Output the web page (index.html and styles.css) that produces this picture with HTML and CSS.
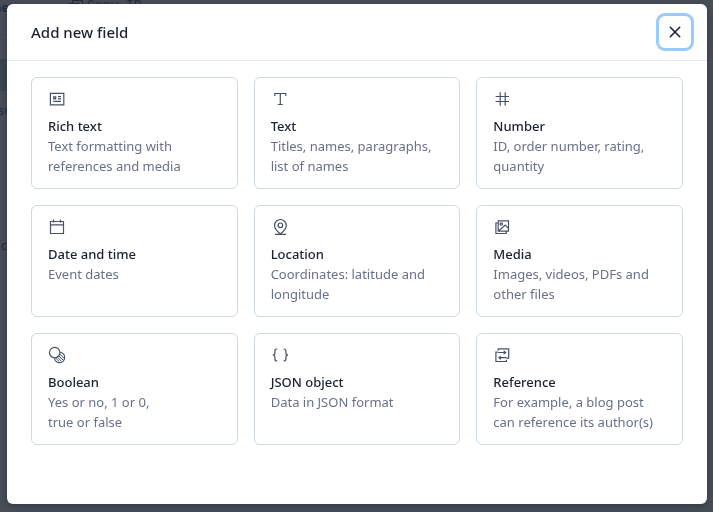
FILE: index.html
```html
<!DOCTYPE html>
<html lang="en">
<head>
<meta charset="utf-8">
<title>Add new field</title>
<link rel="stylesheet" href="styles.css">
</head>
<body>

<div class="page" aria-hidden="true">
  <div class="page-side">
    <div class="side-title">ne</div>
    <div class="side-active"></div>
    <div class="side-item">so</div>
    <div class="side-item last">c</div>
  </div>
  <div class="page-top">
    <svg width="14" height="14" viewBox="0 0 14 14"><path d="M3.5 3.5v-3h10v10h-3M.5 3.5h10v10H.5z"/></svg>
    <span>Copy ID</span>
  </div>
</div>

<div class="overlay">
  <div class="dialog" role="dialog" aria-labelledby="dialogTitle">
    <div class="dialog-header">
      <h2 id="dialogTitle">Add new field</h2>
      <button class="close" aria-label="Close">
        <svg width="12" height="12" viewBox="0 0 12 12"><path d="M1.3 1.3l9.4 9.4M10.7 1.3l-9.4 9.4"/></svg>
      </button>
    </div>

    <div class="fields">
      <button class="field">
        <svg class="icon" viewBox="0 0 18 18"><path d="M2.4 3.3h13.4v11.6H2.4z"/><path d="M5.7 6.8h2v2h-2zM10 6.6h3M10 8.8h3M5.2 11.4H13"/></svg>
        <span class="name">Rich text</span>
        <span class="info">Text formatting with references and media</span>
      </button>
      <button class="field">
        <svg class="icon" viewBox="0 0 18 18"><path d="M3.8 6V3.5h11V6M9.3 3.5v11M6.8 14.5h5"/></svg>
        <span class="name">Text</span>
        <span class="info">Titles, names, paragraphs, list of names</span>
      </button>
      <button class="field">
        <svg class="icon" viewBox="0 0 18 18"><path d="M7.2 2.3v13.4M12.2 2.3v13.4M2.6 6.5h13.4M2.6 11.5h13.4"/></svg>
        <span class="name">Number</span>
        <span class="info">ID, order number, rating, quantity</span>
      </button>
      <button class="field">
        <svg class="icon" viewBox="0 0 18 18"><path d="M2.5 3.5h13v12h-13zM2.5 6.8h13M5.5 1.5v3M12.5 1.5v3"/></svg>
        <span class="name">Date and time</span>
        <span class="info">Event dates</span>
      </button>
      <button class="field">
        <svg class="icon" viewBox="0 0 18 18"><path d="M9.4 16C6 13.2 3.5 10.4 3.5 7.4a5.9 5.9 0 0 1 11.8 0c0 3-2.5 5.8-5.9 8.6zM4 16.3h11"/><circle cx="9.4" cy="7.3" r="2.3"/></svg>
        <span class="name">Location</span>
        <span class="info">Coordinates: latitude and longitude</span>
      </button>
      <button class="field">
        <svg class="icon" viewBox="0 0 18 18"><path d="M5.2 2.9h10.3v10.3H5.2zM5.2 5H2.9v10.5h10.3v-2.3M5.5 13l6.7-6 3.3 3.4"/><circle cx="8.3" cy="6" r="1.2"/></svg>
        <span class="name">Media</span>
        <span class="info">Images, videos, PDFs and other files</span>
      </button>
      <button class="field">
        <svg class="icon" viewBox="0 0 18 18"><circle cx="6.7" cy="6.6" r="5.2"/><path d="M12.3 6.4a5.1 5.1 0 1 1-5.8 5.9"/><path class="hatch" d="M12 8.2l4.2 4.2M10.8 9.8l4.3 4.3M9.3 11l4.2 4.2M7.6 11.9l3.4 3.4"/></svg>
        <span class="name">Boolean</span>
        <span class="info">Yes or no, 1 or 0,<br>true or false</span>
      </button>
      <button class="field">
        <svg class="icon" viewBox="0 0 18 18"><path d="M6.2 3C4.3 3 3.9 3.7 3.9 5v2c0 1.3-.6 2-2.2 2 1.6 0 2.2.7 2.2 2v2c0 1.3.4 2 2.3 2M12.6 3c1.9 0 2.3.7 2.3 2v2c0 1.3.6 2 2.2 2-1.6 0-2.2.7-2.2 2v2c0 1.3-.4 2-2.3 2"/></svg>
        <span class="name">JSON object</span>
        <span class="info">Data in JSON format</span>
      </button>
      <button class="field">
        <svg class="icon" viewBox="0 0 18 18"><path d="M5.2 4.8V2.9h10.5v9.2h-2.2M4.8 6.2H2.9v9.3h10.5v-1.7M5.2 6.5h6.6M13.4 11.7H6.8"/><path class="tip" d="M10.7 4.2l2.9 2.3-2.9 2.3zM7.9 9.4L5 11.7 7.9 14z"/></svg>
        <span class="name">Reference</span>
        <span class="info">For example, a blog post can reference its author(s)</span>
      </button>
    </div>
  </div>
</div>

</body>
</html>
```

FILE: styles.css
```css
* {
  box-sizing: border-box;
}

body {
  margin: 0;
  font-family: "Segoe UI", "Noto Sans", sans-serif;
  font-size: 13px;
  line-height: 20px;
  color: #1b2233;
  background: #484e58;
}

svg {
  fill: none;
  stroke: #46526a;
}

/* page under the overlay */
.page {
  display: flex;
  height: 100vh;
  overflow: hidden;
  color: #252c38;
}

.page-side {
  width: 69px;
}

.side-title {
  height: 35px;
  line-height: 14px;
  font-weight: bold;
  text-indent: -7px;
  border-bottom: 1px solid #414851;
}

.side-active {
  height: 32px;
  margin-top: 24px;
  background: #3c444c;
}

.side-item {
  padding-top: 9px;
  text-indent: -2px;
}

.side-item.last {
  padding-top: 115px;
  text-indent: 1px;
}

.page-top {
  display: flex;
  gap: 4px;
  line-height: 12px;
  font-family: "Liberation Mono", monospace;
}

.page-top svg {
  stroke: #252c38;
}

/* dialog */
.overlay {
  position: fixed;
  inset: 0;
  padding: 4px 6px 8px 7px;
}

.dialog {
  height: 100%;
  overflow: auto;
  background: #fff;
  border-radius: 6px;
  box-shadow: 0 2px 6px rgba(20, 26, 36, 0.4);
}

.dialog-header {
  display: flex;
  align-items: center;
  justify-content: space-between;
  padding: 12px 16px 12px 24px;
  border-bottom: 1px solid #e5e9ed;
}

.dialog-header h2 {
  margin: 0;
  font-size: 15px;
  font-weight: 500;
}

.close {
  display: flex;
  align-items: center;
  justify-content: center;
  width: 32px;
  height: 32px;
  padding: 0;
  border: 0;
  border-radius: 6px;
  background: #fff;
  box-shadow: 0 0 0 3px #98cbff;
}

.close svg {
  stroke: #1b2233;
  stroke-width: 1.6;
  stroke-linecap: round;
}

.fields {
  display: grid;
  grid-template-columns: repeat(3, 1fr);
  gap: 16px;
  padding: 16px 24px;
}

.field {
  display: flex;
  flex-direction: column;
  align-items: flex-start;
  min-height: 112px;
  padding: 12px 16px;
  border: 1px solid #cfd9e0;
  border-radius: 6px;
  background: #fff;
  color: #1b2233;
  font: inherit;
  text-align: left;
  cursor: pointer;
}

.field:hover {
  background: #f7f9fa;
}

.icon {
  width: 18px;
  height: 18px;
  margin-bottom: 8px;
  stroke-width: 1.2;
}

.icon .hatch {
  stroke-width: 1;
}

.icon .tip {
  fill: #46526a;
  stroke: none;
}

.name {
  font-weight: 500;
}

.info {
  color: #67728a;
}
```
